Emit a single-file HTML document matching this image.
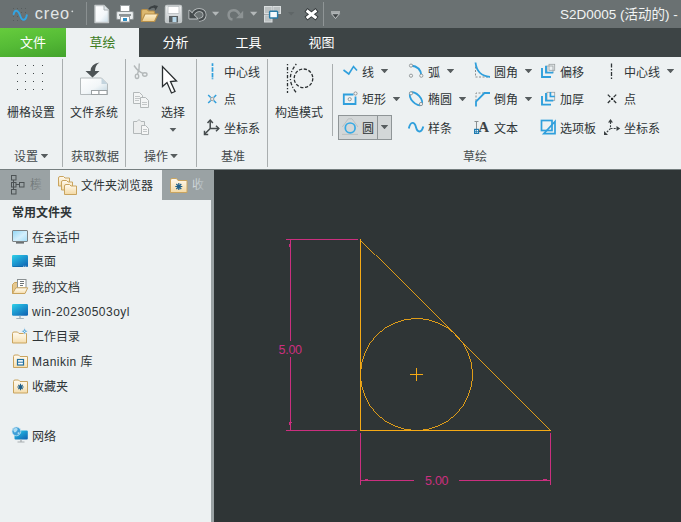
<!DOCTYPE html>
<html lang="zh-CN">
<head>
<meta charset="utf-8">
<title>S2D0005</title>
<style>
*{box-sizing:border-box;margin:0;padding:0}
html,body{width:681px;height:522px;overflow:hidden;background:#2f3536}
body{position:relative;font-family:"Liberation Sans","Noto Sans CJK SC",sans-serif;font-size:12px;color:#2e3436}
.abs{position:absolute}
.t{position:absolute;white-space:nowrap;line-height:16px;height:16px;margin-top:1px}
.ls{letter-spacing:0.48px}
#title{left:0;top:0;width:681px;height:28px;background:#6a7172}
#tabs{left:0;top:28px;width:681px;height:29px;background:#3d4445}
#ribbon{left:0;top:57px;width:681px;height:112px;background:#edf1f2}
#ribline{left:0;top:169px;width:681px;height:1px;background:#757e7f}
#ltabs{left:0;top:170px;width:214px;height:30px;background:#9aa2a4}
#lpanel{left:0;top:200px;width:211px;height:322px;background:#edf1f2}
#lsplit{left:211px;top:200px;width:3px;height:322px;background:#9aa2a4}
#canvas{left:214px;top:170px;width:467px;height:352px;background:#2f3536}
.tab{position:absolute;top:0;height:29px;line-height:30px;font-size:13px;color:#fff;text-align:center;width:73px}
.sep{position:absolute;width:1px;background:#a9aeaf}
.dd{position:absolute;width:7.6px;height:4.3px;margin-left:0.2px;background:#575d5f;clip-path:polygon(0 0,100% 0,50% 100%)}
</style>
</head>
<body>
<div id="title" class="abs">
<svg class="abs" style="left:0;top:0" width="681" height="28" viewBox="0 0 681 28">
<defs>
<linearGradient id="gpaper" x1="0" y1="0" x2="1" y2="1"><stop offset="0" stop-color="#ffffff"/><stop offset="0.6" stop-color="#f4f8fa"/><stop offset="1" stop-color="#c9dde8"/></linearGradient>
<linearGradient id="gfold" x1="0" y1="0" x2="0" y2="1"><stop offset="0" stop-color="#fcf0d0"/><stop offset="1" stop-color="#edcd8c"/></linearGradient>
<linearGradient id="gsave" x1="0" y1="0" x2="0" y2="1"><stop offset="0" stop-color="#fdfdfd"/><stop offset="1" stop-color="#b9c0c3"/></linearGradient>
</defs>
<!-- creo logo dots -->
<g fill="#565d5e"><rect x="13" y="8" width="1" height="1"/><rect x="17" y="8" width="1" height="1"/><rect x="21" y="8" width="1" height="1"/><rect x="25" y="8" width="1" height="1"/><rect x="13" y="12" width="1" height="1"/><rect x="17" y="12" width="1" height="1"/><rect x="21" y="12" width="1" height="1"/><rect x="25" y="12" width="1" height="1"/><rect x="13" y="16" width="1" height="1"/><rect x="17" y="16" width="1" height="1"/><rect x="21" y="16" width="1" height="1"/><rect x="25" y="16" width="1" height="1"/><rect x="13" y="20" width="1" height="1"/><rect x="17" y="20" width="1" height="1"/><rect x="21" y="20" width="1" height="1"/><rect x="25" y="20" width="1" height="1"/></g>
<path d="M13.600 14.300 C14.600 9.500 18 9.500 20 15.200 C22 21.300 25.500 21.300 26.800 15.300" fill="none" stroke="#6a7172" stroke-width="3.600" stroke-linecap="round"/>
<path d="M13.600 14.300 C14.600 9.500 18 9.500 20 15.200 C22 21.300 25.500 21.300 26.800 15.300" fill="none" stroke="#33a4e2" stroke-width="1.900" stroke-linecap="round"/>
<text x="34.800" y="19.300" font-family="Liberation Sans, sans-serif" font-size="16.300" fill="#e2e6e6" letter-spacing="0.900">creo</text>
<circle cx="72.300" cy="11.300" r="0.900" fill="#d5d9d9"/>
<!-- sep -->
<rect x="86" y="2" width="1" height="23" fill="#8a9091"/>
<!-- new -->
<path d="M95 5.5 H104 L108.5 10 V22.5 H95 Z" fill="url(#gpaper)" stroke="#c3c8c9" stroke-width="1.4" stroke-linejoin="round"/>
<path d="M104 5.5 V10 H108.5" fill="#dfe6ea" stroke="#aab0b2" stroke-width="1"/>
<!-- print -->
<rect x="120.5" y="5.5" width="9" height="7" fill="#ffffff" stroke="#9aa0a2" stroke-width="1"/>
<rect x="116.500" y="11.500" width="17" height="8" rx="1.500" fill="#e9edee" stroke="#8d9496" stroke-width="1.2"/>
<rect x="119" y="14" width="12" height="2" fill="#8e9597"/>
<rect x="120.5" y="16.500" width="9" height="5.500" fill="#ffffff" stroke="#9aa0a2" stroke-width="1"/>
<rect x="123" y="18" width="4" height="3" fill="#2f8fc4"/>
<!-- open -->
<path d="M141.500 21.500 V11 Q141.500 9.500 143 9.500 H147 L148.500 11 H153.500 Q154.500 11 154.500 12.500 V14" fill="#ddb970" stroke="#b8904a" stroke-width="1.200"/>
<path d="M141.500 21.500 L145 14 H158 L154.500 21.500 Z" fill="url(#gfold)" stroke="#b8904a" stroke-width="1.200" stroke-linejoin="round"/>
<path d="M149 9 Q152 5.500 156 7.500" fill="none" stroke="#3b4143" stroke-width="1.800"/>
<path d="M153.500 5 L158 6 L155.500 10.500 Z" fill="#3b4143"/>
<!-- save -->
<rect x="165.500" y="5.500" width="16" height="17" rx="1.500" fill="url(#gsave)" stroke="#c3c8c9" stroke-width="1.400"/>
<rect x="168" y="6.500" width="11" height="7" fill="#ffffff" stroke="#b8bec0" stroke-width="0.800"/>
<rect x="169" y="16" width="9" height="6.500" fill="#596063"/>
<rect x="172.500" y="17" width="4" height="5" fill="#b8d8ea"/>
<!-- undo -->
<g stroke="#c3c8c9" fill="none" stroke-linejoin="round">
<path d="M193 14.500 Q195 10 199.500 10.200 Q204.600 10.500 204.600 15 Q204.500 19.300 199 19.900" stroke-width="3.800"/>
<path d="M189.300 10.600 V18.600 H197.300 Z" fill="#c3c8c9" stroke-width="1.600"/>
</g>
<path d="M193 14.500 Q195 10 199.500 10.200 Q204.600 10.500 204.600 15 Q204.500 19.300 199 19.900" fill="none" stroke="#464c4e" stroke-width="2.300"/>
<path d="M189.300 10.600 V18.600 H197.300 Z" fill="#464c4e"/>
<path d="M212 11.800 H219.200 L215.600 15.800 Z" fill="#b3b8b9"/>
<!-- redo (disabled) -->
<path d="M239.500 14.500 Q237.500 10 233.500 10.200 Q228.600 10.500 228.600 15 Q228.700 19 232.500 19.600" fill="none" stroke="#8d9394" stroke-width="2.500"/>
<path d="M243.200 10.800 V18.300 H236 Z" fill="#8d9394"/>
<path d="M250 11.800 H257.300 L253.650 15.800 Z" fill="#b3b8b9"/>
<!-- windows -->
<g fill="#bcc1c2" stroke="#dadedf" stroke-width="1">
<rect x="264.500" y="6.500" width="7.500" height="7"/>
<rect x="273" y="6.500" width="7.500" height="7"/>
<rect x="264.500" y="15" width="7.500" height="7"/>
</g>
<rect x="269.600" y="11.300" width="8" height="6.700" rx="0.800" fill="#f4f9fc" stroke="#2a7ba6" stroke-width="1.400"/>
<path d="M288 12 H294.400 L291.200 15.600 Z" fill="#5f6667"/>
<!-- close -->
<path d="M307.800 11.400 L315.200 17.200 M315.200 11.400 L307.800 17.200" stroke="#33383a" stroke-width="4.800" stroke-linecap="square"/>
<path d="M307.800 11.400 L315.200 17.200 M315.200 11.400 L307.800 17.200" stroke="#ffffff" stroke-width="3" stroke-linecap="square"/>
<!-- sep -->
<rect x="323" y="2" width="1" height="24" fill="#8f9596"/>
<rect x="331" y="11.500" width="9" height="1" fill="#dfe3e3"/>
<path d="M331.500 13.700 H339.500 L335.500 18.500 Z" fill="#3f4547" stroke="#d0d4d5" stroke-width="0.900"/>
<text x="560" y="19" font-family="Liberation Sans, Noto Sans CJK SC, sans-serif" font-size="13.500" fill="#f2f4f4">S2D0005 (活动的) -</text>
</svg>
</div>
<div id="tabs" class="abs">
<div class="tab" style="left:0;width:66px;background:linear-gradient(170deg,#66cc3d 0%,#55bb36 50%,#43a32c 100%)">文件</div>
<div class="tab" style="left:66px;background:#edf1f2;color:#3f7d1f">草绘</div>
<div class="tab" style="left:139px">分析</div>
<div class="tab" style="left:212px">工具</div>
<div class="tab" style="left:285px">视图</div>
</div>
<div id="ribbon" class="abs">
<div class="sep" style="left:62px;top:2px;height:108px"></div><div class="sep" style="left:125px;top:2px;height:108px"></div><div class="sep" style="left:196px;top:2px;height:108px"></div><div class="sep" style="left:267px;top:2px;height:108px"></div><div class="sep" style="left:332px;top:7px;height:72px"></div>
<div class="t" style="left:7px;top:47px;">栅格设置</div>
<div class="t" style="left:70px;top:47px;">文件系统</div>
<div class="t" style="left:161px;top:47px;">选择</div>
<div class="t" style="left:275px;top:47px;">构造模式</div>
<div class="t" style="left:14px;top:91px;color:#444a4c">设置</div>
<div class="dd" style="left:40.5px;top:97px"></div>
<div class="t" style="left:71px;top:91px;color:#444a4c">获取数据</div>
<div class="t" style="left:144px;top:91px;color:#444a4c">操作</div>
<div class="dd" style="left:170px;top:97px"></div>
<div class="t" style="left:221px;top:91px;color:#444a4c">基准</div>
<div class="t" style="left:463px;top:91px;color:#444a4c">草绘</div>
<div class="dd" style="left:169px;top:70.5px"></div>
<div class="t" style="left:224px;top:7px;">中心线</div>
<div class="t" style="left:224px;top:34px;">点</div>
<div class="t" style="left:224px;top:62.5px;">坐标系</div>
<div class="t" style="left:362px;top:7px;">线</div>
<div class="dd" style="left:380.5px;top:12px"></div>
<div class="t" style="left:428px;top:7px;">弧</div>
<div class="dd" style="left:446.5px;top:12px"></div>
<div class="t" style="left:494px;top:7px;">圆角</div>
<div class="dd" style="left:524.5px;top:12px"></div>
<div class="t" style="left:560px;top:7px;">偏移</div>
<div class="t" style="left:624px;top:7px;">中心线</div>
<div class="dd" style="left:666.5px;top:12px"></div>
<div class="t" style="left:362px;top:34px;">矩形</div>
<div class="dd" style="left:392.5px;top:40px"></div>
<div class="t" style="left:428px;top:34px;">椭圆</div>
<div class="dd" style="left:458.5px;top:40px"></div>
<div class="t" style="left:494px;top:34px;">倒角</div>
<div class="dd" style="left:524.5px;top:40px"></div>
<div class="t" style="left:560px;top:34px;">加厚</div>
<div class="t" style="left:624px;top:34px;">点</div>
<div class="abs" style="left:338px;top:58px;width:54px;height:25px;background:#d3d7d8;border:1px solid #8f9597"></div><div class="abs" style="left:377px;top:59px;width:1px;height:23px;background:#8f9597"></div>
<div class="t" style="left:362px;top:62.5px;">圆</div>
<div class="dd" style="left:380.5px;top:68px"></div>
<div class="t" style="left:428px;top:62.5px;">样条</div>
<div class="t" style="left:494px;top:62.5px;">文本</div>
<div class="t" style="left:560px;top:62.5px;">选项板</div>
<div class="t" style="left:624px;top:62.5px;">坐标系</div>
<svg class="abs" style="left:0;top:0" width="681" height="112" viewBox="0 57 681 112">
<defs>
<linearGradient id="gfs" x1="0" y1="0" x2="1" y2="1"><stop offset="0" stop-color="#ffffff"/><stop offset="0.55" stop-color="#f2f6f8"/><stop offset="1" stop-color="#bcd3df"/></linearGradient>
</defs>
<!-- grid dots -->
<g fill="#3f4547"><rect x="17" y="65" width="1" height="1"/><rect x="25" y="65" width="1" height="1"/><rect x="33" y="65" width="1" height="1"/><rect x="42" y="65" width="1" height="1"/><rect x="17" y="73" width="1" height="1"/><rect x="25" y="73" width="1" height="1"/><rect x="33" y="73" width="1" height="1"/><rect x="42" y="73" width="1" height="1"/><rect x="17" y="81" width="1" height="1"/><rect x="25" y="81" width="1" height="1"/><rect x="33" y="81" width="1" height="1"/><rect x="42" y="81" width="1" height="1"/><rect x="17" y="89" width="1" height="1"/><rect x="25" y="89" width="1" height="1"/><rect x="33" y="89" width="1" height="1"/><rect x="42" y="89" width="1" height="1"/></g>
<!-- file system -->
<path d="M80.500 78 H101.500 L107.500 84 V94.500 H80.500 Z" fill="url(#gfs)" stroke="#b4babc" stroke-width="1"/>
<path d="M101.500 78 V84 H107.500 Z" fill="#c3d4de"/>
<rect x="91.500" y="90.500" width="7.500" height="4" fill="#ffffff" stroke="#9aa0a2" stroke-width="1"/>
<rect x="99" y="90.500" width="8" height="4" fill="#ffffff" stroke="#9aa0a2" stroke-width="1"/>
<path d="M99.500 62.500 Q91 63.500 90.500 71 H85.500 L92.500 77.500 L99.500 71 H95 Q95 65 99.500 62.500 Z" fill="#4d5355"/>
<!-- scissors (disabled) -->
<g fill="none" stroke="#b3b8b9" stroke-width="1.400">
<path d="M139.300 63.500 Q139.500 70 137.500 74"/><path d="M134 65.500 Q138 71.500 142.800 73.300"/>
<ellipse cx="137" cy="76.300" rx="1.700" ry="2.200"/><ellipse cx="144.800" cy="74.500" rx="2.200" ry="1.700"/>
</g>
<!-- copy (disabled) -->
<g fill="#f3f5f5" stroke="#b3b8b9" stroke-width="1">
<path d="M133.500 92.500 H139.500 L142.500 95.500 V103.500 H133.500 Z"/>
<path d="M140.500 97.500 H145.500 L148.500 100.500 V107.500 H140.500 Z"/>
</g>
<g stroke="#c3c7c8" stroke-width="1"><path d="M135 96.500 H140 M135 98.500 H140 M135 100.500 H139 M142 102.500 H147 M142 104.500 H147"/></g>
<!-- paste (disabled) -->
<g fill="#eceeee" stroke="#b3b8b9" stroke-width="1">
<path d="M133.500 121.500 H137 L139 119.500 L141 121.500 H144.500 V133.500 H133.500 Z"/>
<path d="M141.500 125.500 H145.500 L148.500 128.500 V134.500 H141.500 Z" fill="#f6f7f7"/>
</g>
<g stroke="#c3c7c8" stroke-width="1"><path d="M143 129.500 H147 M143 131.500 H147"/></g>
<!-- select arrow -->
<path d="M162.500 66.500 V86.500 L167 82.500 L171.500 93 L175 91.500 L170.500 81.500 L176.500 81 Z" fill="#ffffff" stroke="#2a2f31" stroke-width="1.300" stroke-linejoin="miter"/>
<!-- centerline blue -->
<g stroke="#2f9fdc" stroke-width="1.700"><path d="M212.500 63.200 V66 M212.500 67.200 V71.700 M212.500 72.900 V77.400 M212.500 78.300 V79.200"/></g>
<!-- point blue -->
<g stroke="#2f9fdc" stroke-width="1.500"><path d="M208.200 95 L210.700 97.500 M216.200 95 L213.700 97.500 M208.200 103 L210.700 100.500 M216.200 103 L213.700 100.500"/></g>
<circle cx="212.200" cy="99" r="1.700" fill="#e4e7e8" stroke="#8f9597" stroke-width="0.900"/>
<!-- csys -->
<g fill="none" stroke="#454b4d" stroke-width="1.500"><path d="M210.200 120.500 V128.500 H218.500 M210.200 128.500 L204.800 134"/><path d="M207.500 123 L210.200 120.200 L212.900 123"/><path d="M204.500 130.800 V134.500 H208.200"/><path d="M216 125.800 L218.800 128.500 L216 131.200"/></g>
<!-- construct mode -->
<g fill="none" stroke="#2a2f31" stroke-width="1.300">
<path d="M287.500 64 V93" stroke-dasharray="1.200 1.800 3.200 1.800"/>
<path d="M296.300 64 Q284.500 78.300 296.300 92.600" stroke-dasharray="1.200 1.800 3.400 1.800"/>
<circle cx="303.500" cy="78.300" r="9.300" stroke-dasharray="3.200 1.670"/>
</g>
<!-- line -->
<path d="M343.500 70 L348.800 74 L353.500 66.500 L357 70.500" fill="none" stroke="#2f9fdc" stroke-width="1.600"/>
<!-- arc -->
<path d="M411 65.500 Q420.500 66.500 421.500 75.500" fill="none" stroke="#2f9fdc" stroke-width="1.800"/>
<g fill="#f3f5f5" stroke="#8a9092" stroke-width="0.900"><circle cx="411" cy="65.600" r="1.600"/><circle cx="411" cy="75.700" r="1.600"/><circle cx="421.300" cy="75.700" r="1.600"/></g>
<!-- fillet -->
<path d="M475.500 63 V77 H490" fill="none" stroke="#8a9092" stroke-width="1" stroke-dasharray="2 1.500"/>
<path d="M475.500 62.500 Q477 76 490 76.800" fill="none" stroke="#2f9fdc" stroke-width="1.800"/>
<!-- offset -->
<g fill="none" stroke="#9aa0a2" stroke-width="0.800"><rect x="547" y="66" width="6" height="6.500"/><rect x="549" y="64.300" width="5.700" height="6"/></g>
<path d="M542 68 V77 H551" fill="none" stroke="#2f9fdc" stroke-width="1.900"/>
<path d="M546 65.700 V72.600 H553.300" fill="none" stroke="#2f9fdc" stroke-width="1.900"/>
<!-- centerline dark -->
<path d="M611.500 63.500 V79.500" stroke="#2e3436" stroke-width="1.300" stroke-dasharray="4 1.500 1.500 1.500"/>
<!-- rect -->
<path d="M353.500 94.500 H343.800 V104 H355.500 V96.500" fill="none" stroke="#2f9fdc" stroke-width="1.800"/>
<g fill="#f3f5f5" stroke="#8a9092" stroke-width="0.900"><circle cx="349.700" cy="99.200" r="1.600"/><circle cx="355.500" cy="93.500" r="1.600"/></g>
<!-- ellipse -->
<ellipse cx="416" cy="98.800" rx="8" ry="4.200" transform="rotate(47 416 98.800)" fill="none" stroke="#2f9fdc" stroke-width="1.800"/>
<g fill="#f3f5f5" stroke="#8a9092" stroke-width="0.900"><circle cx="411" cy="93.300" r="1.600"/><circle cx="421" cy="104" r="1.600"/></g>
<!-- chamfer -->
<path d="M476 101 V93 H485" fill="none" stroke="#8a9092" stroke-width="1" stroke-dasharray="2 1.500"/>
<path d="M476 106.500 V101.500 L484.500 93 H490" fill="none" stroke="#2f9fdc" stroke-width="1.800"/>
<!-- thicken -->
<g fill="none" stroke="#9aa0a2" stroke-width="0.800"><rect x="547" y="92.300" width="7.700" height="8"/></g>
<path d="M542 96 V104.600 H551" fill="none" stroke="#2f9fdc" stroke-width="1.900"/>
<path d="M546 93 V100.600 H553.300" fill="none" stroke="#2f9fdc" stroke-width="1.900"/>
<path d="M550.400 92 V96.500 H554.800" fill="none" stroke="#2f9fdc" stroke-width="1.700"/>
<!-- point dark -->
<g stroke="#2e3436" stroke-width="1.300"><path d="M607.800 94.600 L610.300 97.100 M613.700 100.500 L616.200 103 M616.200 94.600 L613.700 97.100 M610.300 100.500 L607.800 103"/></g>
<rect x="611" y="97.800" width="2.200" height="2.200" fill="#1e2223"/>
<!-- circle -->
<path d="M342.300 127 L348.300 118.800 H352 L358 127 M342 134.400 H358" fill="none" stroke="#b9bdbe" stroke-width="0.900"/>
<circle cx="350.200" cy="127.900" r="4.900" fill="none" stroke="#36a9e4" stroke-width="1.700"/>
<!-- spline -->
<path d="M408.800 128.500 C410.500 121 414.500 121.500 416 127.300 C417.500 133 421.500 133 423.300 126.500" fill="none" stroke="#2f9fdc" stroke-width="1.900"/>
<!-- text -->
<path d="M474.500 121.500 H478.500 M476.500 121.500 V130" stroke="#8a9092" stroke-width="1" fill="none"/>
<text x="478.300" y="132" font-family="Liberation Serif, serif" font-weight="bold" font-size="15" fill="#3d4345">A</text>
<rect x="474" y="128.800" width="5.200" height="5.200" fill="#1f7bb0"/>
<rect x="475.300" y="130" width="1" height="1" fill="#fff"/><rect x="477" y="130" width="1" height="1" fill="#fff"/><rect x="475.300" y="131.700" width="1" height="1" fill="#fff"/><rect x="477" y="131.700" width="1" height="1" fill="#fff"/>
<!-- palette -->
<rect x="541.500" y="120.500" width="10.500" height="10" fill="none" stroke="#2f9fdc" stroke-width="1.700"/>
<path d="M555 121.500 L543.800 133.700 H555 Z" fill="none" stroke="#2f9fdc" stroke-width="1.700" stroke-linejoin="miter"/>
<!-- csys dashed -->
<g fill="none" stroke="#3a4042" stroke-width="1.100"><path d="M610.500 122 V128.500" stroke-dasharray="2 1.200"/><path d="M610.500 128.500 H617" stroke-dasharray="2 1.200"/><path d="M610.500 128.500 L605.500 133.500" stroke-dasharray="2 1.200"/></g>
<path d="M608 122.500 L610.500 119 L613 122.500 Z M616.500 126 L620.200 128.500 L616.500 131 Z M604 131 V135 H608 Z" fill="#3a4042"/>
</svg>
</div>
<div id="ribline" class="abs"></div>
<div id="ltabs" class="abs">
<div class="abs" style="left:50px;top:0;width:112px;height:30px;background:#edf1f2"></div>
<div class="t" style="left:30px;top:6px;color:#737b7d;width:12px;overflow:hidden">模</div><div class="abs" style="left:33px;top:6px;width:10px;height:18px;background:linear-gradient(90deg,rgba(154,162,164,0),rgba(154,162,164,0.85))"></div>
<div class="t" style="left:81px;top:6.5px">文件夹浏览器</div>
<div class="t" style="left:192px;top:6px;color:#d3d9db;width:12px;overflow:hidden">收</div><div class="abs" style="left:195px;top:6px;width:10px;height:18px;background:linear-gradient(90deg,rgba(154,162,164,0),rgba(154,162,164,0.8))"></div>
<svg class="abs" style="left:0;top:0" width="214" height="30" viewBox="0 170 214 30">
<defs>
<linearGradient id="gf1" x1="0" y1="0" x2="0" y2="1"><stop offset="0" stop-color="#fffaf0"/><stop offset="1" stop-color="#f3d9a4"/></linearGradient>
</defs>
<!-- tree icon -->
<g fill="none" stroke="#4d5355" stroke-width="1">
<path d="M13.500 180 V189.500 M16 184.500 H19.500"/>
<rect x="11.500" y="175.500" width="4.500" height="4.500" fill="none"/><rect x="11.500" y="182.500" width="4.500" height="4.500" fill="none"/><rect x="11.500" y="189.500" width="4.500" height="4.500" fill="none"/><rect x="19.500" y="182.500" width="4.500" height="4.500" fill="none"/>
</g>
<!-- folders stack -->
<g stroke="#c9a45f" stroke-width="1" fill="url(#gf1)">
<path d="M58.500 186 V178 Q58.500 176.500 60 176.500 H63.500 L65 178 H69.500 V186 Z"/>
<path d="M61.500 190 V182 Q61.500 180.500 63 180.500 H66.500 L68 182 H72.500 V190 Z"/>
<path d="M64.500 194.500 V186 Q64.500 184.500 66 184.500 H69.500 L71 186 H76.500 V194.500 Z"/>
</g>
<!-- fav folder -->
<path d="M170.500 192.500 V180 Q170.500 178.500 172 178.500 H176.500 L178 180.500 H187 V192.500 Z" fill="url(#gf1)" stroke="#c9a45f" stroke-width="1"/>
<g stroke="#1f5f8a" stroke-width="1.200"><path d="M178.800 183 V190 M175.300 186.500 H182.300 M176.300 184 L181.300 189 M181.300 184 L176.300 189"/></g>
</svg>
</div>
<div id="lpanel" class="abs">
<div class="t" style="left:12px;top:4.3px;font-weight:bold">常用文件夹</div>
<div class="t" style="left:32px;top:29.0px">在会话中</div>
<div class="t" style="left:32px;top:53.0px">桌面</div>
<div class="t" style="left:32px;top:78.5px">我的文档</div>
<div class="t" style="left:32px;top:103.0px"><span class="ls">win-20230503oyl</span></div>
<div class="t" style="left:32px;top:128.4px">工作目录</div>
<div class="t" style="left:32px;top:153.2px"><span class="ls">Manikin </span>库</div>
<div class="t" style="left:32px;top:178.2px">收藏夹</div>
<div class="t" style="left:32px;top:227.5px">网络</div>
<svg class="abs" style="left:0;top:0" width="211" height="322" viewBox="0 200 211 322">
<defs>
<linearGradient id="gmon" x1="0" y1="0" x2="1" y2="1"><stop offset="0" stop-color="#8fd6f6"/><stop offset="0.550" stop-color="#d4effc"/><stop offset="1" stop-color="#9fdcf7"/></linearGradient>
<linearGradient id="gdesk" x1="0" y1="0" x2="0.800" y2="1"><stop offset="0" stop-color="#30d2e8"/><stop offset="0.450" stop-color="#1e9fd4"/><stop offset="1" stop-color="#1268b5"/></linearGradient>
<linearGradient id="gf2" x1="0" y1="0" x2="0" y2="1"><stop offset="0" stop-color="#fffaf0"/><stop offset="0.5" stop-color="#fbefd4"/><stop offset="1" stop-color="#f4dcab"/></linearGradient>
</defs>
<!-- session monitor -->
<rect x="12.500" y="230.500" width="15" height="11" rx="0.500" fill="url(#gmon)" stroke="#7d8385" stroke-width="1"/>
<rect x="16" y="242" width="8" height="1.600" fill="#6a7072"/>
<!-- desktop -->
<rect x="12" y="255" width="16" height="12" rx="1.200" fill="url(#gdesk)"/>
<rect x="12.500" y="266" width="15" height="1" fill="#0f5f9f" opacity="0.600"/>
<rect x="23.300" y="265.800" width="1" height="1" fill="#cfeaf8"/><rect x="25.300" y="265.800" width="1" height="1" fill="#cfeaf8"/>
<!-- my docs -->
<path d="M12.500 293.500 V284.500 L14.500 282.500 H17.500 V293.500 Z" fill="#e6c88f" stroke="#c9a45f" stroke-width="1" stroke-linejoin="round"/>
<rect x="17.500" y="279.500" width="8.500" height="8.500" fill="#ffffff" stroke="#8a9092" stroke-width="1"/>
<path d="M19.500 281.500 H24 M19.500 283.500 H24 M19.500 285.500 H23" stroke="#6f7577" stroke-width="1" shape-rendering="crispEdges"/>
<path d="M12.600 293.500 L15.800 287.800 H27.700 L25 293.500 Z" fill="url(#gf2)" stroke="#c9a45f" stroke-width="1" stroke-linejoin="round"/>
<!-- computer -->
<rect x="12" y="304" width="16" height="11.800" rx="1.300" fill="url(#gdesk)"/>
<rect x="19.200" y="315.800" width="1.600" height="2.400" fill="#a9b7c0"/><rect x="16.300" y="318" width="7.500" height="1" fill="#9fb0bb"/>
<!-- workdir -->
<path d="M12.500 343 V333.500 Q12.500 332 14 332 H17.500 L19 333.500 H26.500 V343 Z" fill="url(#gf2)" stroke="#c9a45f" stroke-width="1"/>
<path d="M24.600 327.600 L25.600 330.300 L28.300 331.300 L25.600 332.300 L24.600 335 L23.600 332.300 L20.900 331.300 L23.600 330.300 Z" fill="#2a8fd0" stroke="#edf1f2" stroke-width="0.800"/><circle cx="24.600" cy="331.300" r="0.900" fill="#d8eefa"/>
<!-- manikin -->
<path d="M13.500 367.500 V356.500 Q13.500 355 15 355 H18.500 L20 356.500 H27.500 V367.500 Z" fill="url(#gf2)" stroke="#c9a45f" stroke-width="1"/>
<rect x="17.500" y="359.500" width="6" height="5.500" fill="#ffffff" stroke="#1f6fa0" stroke-width="1.200"/><path d="M17.500 362.200 H23.500" stroke="#1f6fa0" stroke-width="1"/>
<!-- favorites -->
<path d="M13.500 393 V381.500 Q13.500 380 15 380 H18.500 L20 381.500 H27.500 V393 Z" fill="url(#gf2)" stroke="#c9a45f" stroke-width="1"/>
<g stroke="#1f5f8a" stroke-width="1.100"><path d="M20.500 383.800 V390.200 M17.300 387 H23.700 M18.300 384.800 L22.700 389.200 M22.700 384.800 L18.300 389.200"/></g>
<!-- network -->
<rect x="14.500" y="430.500" width="13.300" height="9" rx="1" fill="url(#gdesk)"/>
<rect x="20.300" y="439.500" width="1.400" height="2.500" fill="#aab0b2"/><rect x="17.500" y="441.500" width="7" height="1" fill="#aab0b2"/>
<circle cx="16.400" cy="431.400" r="4.400" fill="#3f9fd8" stroke="#cfe6f3" stroke-width="0.700"/>
<path d="M13.300 429.300 Q15 427.600 17.300 428.300 Q18.300 430 16.800 431 Q15.800 432.800 14.300 432.300 Q13 431 13.300 429.300 Z M17.800 432.300 Q19.300 431.800 19.800 433 Q19 434.800 17.600 434.300 Z" fill="#bfe6f7" opacity="0.850"/>
</svg>
</div>
<div id="lsplit" class="abs"></div>
<div id="canvas" class="abs">
<svg class="abs" style="left:0;top:0" width="467" height="352" viewBox="214 170 467 352">
<g fill="none" stroke="#cb2f7f" stroke-width="1" shape-rendering="crispEdges">
<path d="M286 239.500 H358 M286 430.500 H357 M290.500 240 V341 M290.500 357 V431"/>
<path d="M360.500 433 V485 M550.500 433 V485 M361 480.500 H414 M459 480.500 H550"/>
<path d="M289.500 244 V247 M289.500 422 V425 M291 422.500 H292 M365 479.500 H368 M543 479.500 H547"/>
</g>
<g fill="none" stroke="#f4a915" stroke-width="1" shape-rendering="crispEdges">
<path d="M360.500 239 V430.500 H551"/><path d="M360.500 239.500 L550.500 430.500" stroke-width="0.900"/>
<circle cx="416.500" cy="374.500" r="56" stroke-width="0.900"/>
<path d="M410 374.500 H423 M416.500 368 V381"/>
</g>
<text x="278.500" y="354" font-family="Liberation Sans, sans-serif" font-size="12.500" fill="#cb2f7f" textLength="23.500" lengthAdjust="spacing">5.00</text>
<text x="425" y="485" font-family="Liberation Sans, sans-serif" font-size="12.500" fill="#cb2f7f" textLength="23.500" lengthAdjust="spacing">5.00</text>
</svg>
</div>
</body>
</html>
